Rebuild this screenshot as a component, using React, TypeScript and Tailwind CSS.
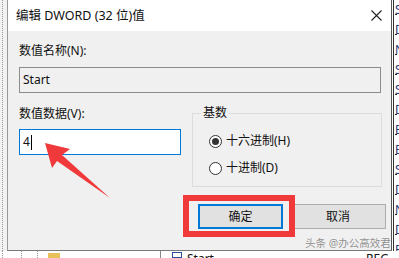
import React from "react";

function Radio({ checked, label }: { checked: boolean; label: string }) {
  return (
    <div className="flex h-[16px] items-center">
      <div className="flex h-[13px] w-[13px] items-center justify-center rounded-full border border-[#333333] bg-white">
        {checked && <div className="h-[7px] w-[7px] rounded-full bg-[#333333]" />}
      </div>
      <span className="ml-[4px] text-[12px] leading-[16px] text-[#111]">{label}</span>
    </div>
  );
}

export default function App() {
  const rows = ["S", "D", "N", "S", "S", "D", "E", "E", "S", "D", "N", "D", "R"];
  return (
    <div className="relative h-[258px] w-[399px] overflow-hidden bg-[#f0f0f0] font-['Noto_Sans','Noto_Sans_CJK_SC',sans-serif] text-[#111]">
      <div className="flex h-[251px]">
        {/* left strip */}
        <div className="relative w-[7px] bg-[#f2f2f2]">
          <div className="absolute left-[2px] top-0 h-full border-l border-dotted border-[#9a9a9a]" />
        </div>
        {/* dialog */}
        <div className="flex w-[385px] flex-col border-b border-l border-r border-b-[#7a7a7a] border-l-[#9a9a9a] border-r-[#555]">
          <div className="flex h-[31px] items-center justify-between bg-white pl-[8px] pr-[9px]">
            <span className="text-[12.5px] leading-[16px] text-[#111]">编辑 DWORD (32 位)值</span>
            <svg width="11" height="11" viewBox="0 0 11 11">
              <path d="M0.5 0.5 L10.5 10.5 M10.5 0.5 L0.5 10.5" stroke="#222" strokeWidth="1.1" />
            </svg>
          </div>
          <div className="flex flex-1 flex-col bg-[#f0f0f0] pl-[11px]">
            <div className="mt-[12px] text-[12px] leading-[16px]">数值名称(N):</div>
            <div className="mt-[8px] flex h-[26px] w-[362px] items-center border border-[#8c8c8c] bg-[#f0f0f0] pl-[3px] text-[12px]">
              Start
            </div>
            <div className="mt-[13px] flex">
              <div className="flex w-[162px] flex-col">
                <div className="text-[12px] leading-[16px]">数值数据(V):</div>
                <div className="mt-[7px] flex h-[26px] w-[162px] items-center border border-[#0078d7] bg-white pl-[3px] text-[12px]">
                  <span>4</span>
                  <span className="ml-[1px] h-[15px] w-[1px] bg-black" />
                </div>
              </div>
              <div className="relative ml-[11px] mt-[7px] h-[74px] w-[190px] border border-[#dcdcdc]">
                <span className="absolute left-[8px] top-[-9px] bg-[#f0f0f0] px-[2px] text-[12px] leading-[16px]">
                  基数
                </span>
                <div className="flex flex-col gap-[11px] pl-[16px] pt-[19px]">
                  <Radio checked label="十六进制(H)" />
                  <Radio checked={false} label="十进制(D)" />
                </div>
              </div>
            </div>
            <div className="mt-[17px] flex">
              <div className="ml-[179px] flex h-[25px] w-[85px] items-center justify-center border-2 border-[#0078d7] bg-[#e1e1e1] text-[12px]">
                确定
              </div>
              <div className="ml-[7px] flex h-[25px] w-[96px] items-center justify-center border border-[#adadad] bg-[#e1e1e1] text-[12px]">
                取消
              </div>
            </div>
          </div>
        </div>
        {/* right strip */}
        <div className="relative w-[7px] overflow-hidden bg-white">
          <div className="absolute left-[1px] top-0 h-full w-[1px] bg-[#333]" />
          <div className="flex flex-col pl-[3px]">
            {rows.map((r, i) => (
              <div key={i} className="relative h-[20px] w-[4px] overflow-hidden text-[12px] leading-[20px] text-[#1e3c78]">
                {r}
                <div className="absolute left-[-2px] top-[14px] h-[1px] w-[4px] bg-[#222]" />
              </div>
            ))}
          </div>
        </div>
      </div>
      {/* bottom strip */}
      <div className="relative h-[7px] overflow-hidden bg-white">
        <div className="absolute left-[2px] top-0 h-full border-l border-dotted border-[#9a9a9a]" />
        <div className="absolute left-[21px] top-0 h-full border-l border-dotted border-[#9a9a9a]" />
        <div className="absolute left-[37px] top-0 h-full border-l border-dotted border-[#9a9a9a]" />
        <div className="absolute left-[48px] top-[2px] h-[5px] w-[12px] bg-[#e8c15a]" />
        <div className="absolute left-[160px] top-0 h-full w-[1px] bg-[#888]" />
        <div className="absolute left-[172px] top-[1px] h-[6px] w-[10px] border border-[#2a4d9a] bg-white" />
        <div className="absolute left-[187px] top-[0px] text-[12px] leading-[16px]">Start</div>
        <div className="absolute left-[366px] top-[0px] text-[12px] leading-[16px]">REG</div>
      </div>
      {/* red highlight rectangle */}
      <div className="absolute left-[183px] top-[195px] h-[42px] w-[112px] border-[6px] border-[#f03a3a]" />
      {/* red arrow */}
      <svg className="pointer-events-none absolute left-0 top-0" width="399" height="258" viewBox="0 0 399 258">
        <polygon points="45,143 70,149 62,155 110,198 57,161 52,168" fill="#f0393a" />
      </svg>
      {/* watermark */}
      <div className="absolute left-[305px] top-[236px] whitespace-nowrap text-[10.5px] leading-[14px] text-[#8f8f8f] [text-shadow:0_0_1px_#fff]">
        头条 @办公高效君
      </div>
    </div>
  );
}
